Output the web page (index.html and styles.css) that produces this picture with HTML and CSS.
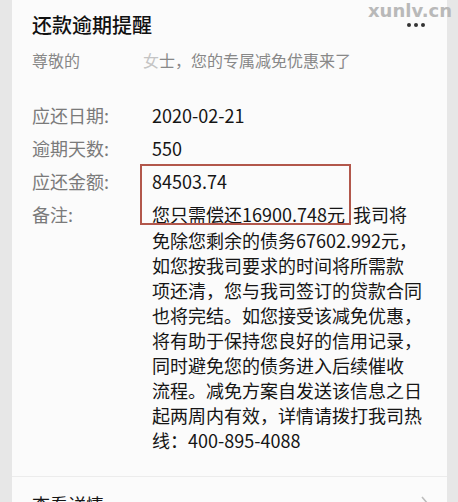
FILE: index.html
```html
<!DOCTYPE html>
<html lang="zh-CN">
<head>
<meta charset="utf-8">
<title>还款逾期提醒</title>
<link rel="stylesheet" href="styles.css">
</head>
<body>
<div class="watermark">xunlv.cn</div>
<div class="card">
  <div class="card-body">
    <div class="header">
      <div class="title">还款逾期提醒</div>
      <div class="dots"><span></span><span></span><span></span></div>
    </div>
    <div class="subtitle">尊敬的<span class="redact"></span><span class="faint">女</span>士，您的专属减免优惠来了</div>
    <div class="fields">
      <div class="label">应还日期:</div>
      <div class="value">2020-02-21</div>
      <div class="label">逾期天数:</div>
      <div class="value">550</div>
      <div class="label">应还金额:</div>
      <div class="value">84503.74</div>
      <div class="label">备注:</div>
      <div class="value note">
        <span class="first">您只需偿还16900.748元&nbsp;&nbsp;我司将</span>
        <div class="rest">
          <span>免除您剩余的债务67602.992元，</span>
          <span>如您按我司要求的时间将所需款</span>
          <span>项还清，您与我司签订的贷款合同</span>
          <span>也将完结。如您接受该减免优惠，</span>
          <span>将有助于保持您良好的信用记录，</span>
          <span>同时避免您的债务进入后续催收</span>
          <span>流程。减免方案自发送该信息之日</span>
          <span>起两周内有效，详情请拨打我司热</span>
          <span>线：400-895-4088</span>
        </div>
      </div>
      <div class="highlight"></div>
    </div>
  </div>
  <div class="footer">
    <span class="footer-text">查看详情</span>
    <svg class="chevron" width="10" height="16" viewBox="0 0 10 16"><polyline points="2,1 8,8 2,15" fill="none" stroke="#bdbdbd" stroke-width="1.6"/></svg>
  </div>
</div>
</body>
</html>
```
FILE: styles.css
```css
html, body {
  margin: 0;
  padding: 0;
  height: 100%;
  overflow: hidden;
}
body {
  background: #e7e7e7;
  font-family: "Noto Sans CJK SC", "Noto Sans", sans-serif;
  color: #151515;
  position: relative;
}
.watermark {
  position: absolute;
  top: 0;
  right: 6px;
  font-family: "DejaVu Sans", sans-serif;
  font-weight: bold;
  font-size: 18px;
  line-height: 21px;
  color: #b9b9b9;
  z-index: 2;
}
.card {
  margin-left: 12px;
  width: 435px;
  min-height: 100%;
  background: #fbfbfb;
}
.card-body {
  padding: 10px 22px 23px 20px;
}
.header {
  display: flex;
  justify-content: space-between;
  align-items: center;
}
.title {
  font-size: 20px;
  line-height: 30px;
  font-weight: 500;
  color: #111;
}
.dots {
  display: flex;
  gap: 3px;
}
.dots span {
  width: 4px;
  height: 4px;
  border-radius: 50%;
  background: #333;
}
.subtitle {
  margin-top: 8px;
  font-size: 16px;
  line-height: 24px;
  color: #888;
  white-space: nowrap;
}
.redact {
  display: inline-block;
  width: 63px;
}
.faint {
  color: #c4c4c4;
}
.fields {
  position: relative;
  margin-top: 27px;
  display: grid;
  grid-template-columns: 120px 1fr;
  font-size: 18px;
  line-height: 33px;
}
.label {
  color: #7a7a7a;
}
.value {
  color: #151515;
  white-space: nowrap;
}
.note .first {
  display: block;
}
.note .rest {
  margin-top: -3px;
  line-height: 25px;
}
.note .rest span {
  display: block;
}
.highlight {
  position: absolute;
  left: 108px;
  top: 65px;
  width: 207px;
  height: 57px;
  border: 2px solid #b2574b;
}
.footer {
  border-top: 1px solid #ececec;
  padding: 14px 22px 0 20px;
  display: flex;
  justify-content: space-between;
  align-items: flex-start;
}
.footer-text {
  font-size: 18px;
  line-height: 26px;
  color: #151515;
}
.chevron {
  margin-top: 5px;
  margin-right: -5px;
}
```
